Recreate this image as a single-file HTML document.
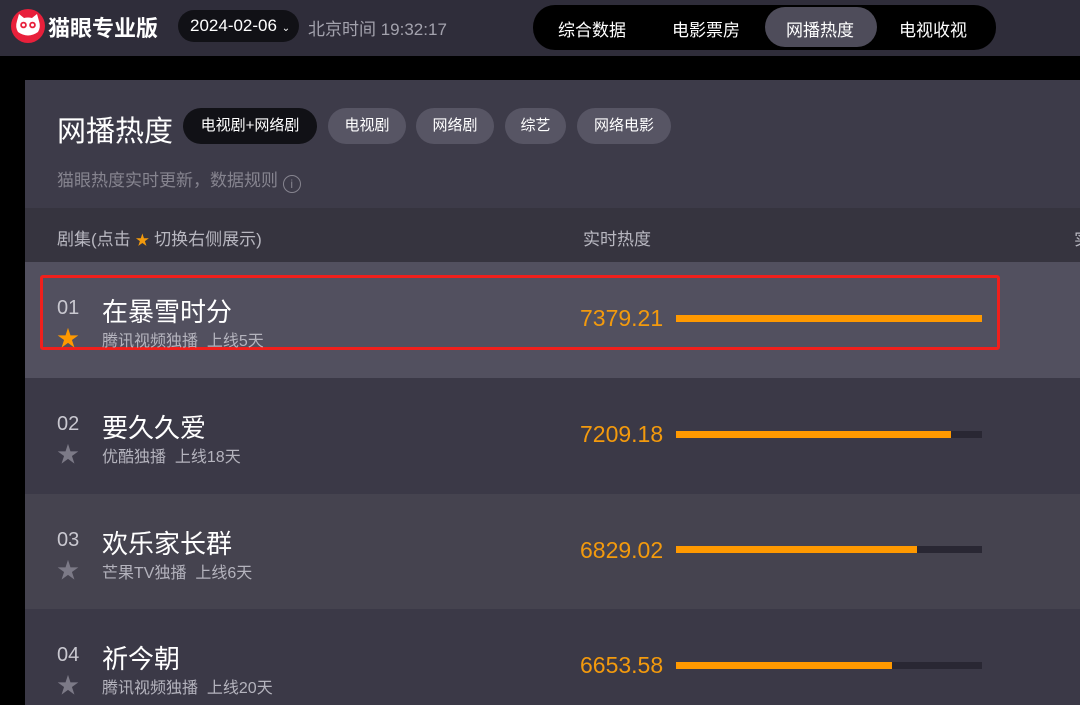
<!DOCTYPE html>
<html><head><meta charset="utf-8"><style>
*{margin:0;padding:0;box-sizing:border-box}
body{width:1080px;height:705px;overflow:hidden;background:#000;font-family:"Liberation Sans","Noto Sans CJK SC",sans-serif;position:relative;color:#fff}
.a{position:absolute;white-space:nowrap}
.top{position:absolute;left:0;top:0;width:1080px;height:56px;background:#2f2d3a}
.panel{position:absolute;left:25px;top:80px;width:1055px;height:625px;background:#3d3b49}
.chip{position:absolute;top:108px;height:36px;border-radius:18px;background:#575564;color:#fff;font-size:15px;line-height:36px;text-align:center}
.row{position:absolute;left:25px;width:1055px}
.num{font-size:20px;color:#c9c8d0}
.title{font-size:26px;color:#fff}
.sub{font-size:16px;color:#b4b3bd}
.val{font-size:23px;color:#f39a0d}
.star{font-size:22px;color:#7c7a87}
.track{position:absolute;left:676px;width:306px;height:7px;background:#292733}
.fill{height:7px;background:#ff9900}
</style></head><body>
<div class="top"></div>
<svg class="a" style="left:10px;top:8px" width="36" height="36" viewBox="0 0 36 36"><circle cx="18" cy="18" r="17" fill="#e8203b"/><path d="M7 13 L9 6 L14 10 Q18 9 22 10 L27 6 L29 13 Q31 19 28 24 Q18 31 8 24 Q5 19 7 13Z" fill="#fff"/><circle cx="13.5" cy="17" r="3.3" fill="#e8203b"/><circle cx="22.5" cy="17" r="3.3" fill="#e8203b"/><circle cx="13.5" cy="17" r="1.5" fill="#fff"/><circle cx="22.5" cy="17" r="1.5" fill="#fff"/></svg>
<div class="a" style="left:48px;top:11px;font-size:22px;color:#fff;font-weight:bold">猫眼专业版</div>
<div class="a" style="left:178px;top:10px;width:121px;height:32px;border-radius:16px;background:#111116;font-size:17px;line-height:32px;padding-left:12px">2024-02-06 <span style="font-size:10px">⌄</span></div>
<div class="a" style="left:308px;top:15px;font-size:17px;color:#a3a2ad">北京时间 19:32:17</div>
<div class="a" style="left:533px;top:5px;width:463px;height:45px;border-radius:22px;background:#000"></div>
<div class="a" style="left:765px;top:7px;width:112px;height:40px;border-radius:20px;background:#4e4c5a"></div>
<div class="a" style="left:558px;top:16px;font-size:17px">综合数据</div>
<div class="a" style="left:672px;top:16px;font-size:17px">电影票房</div>
<div class="a" style="left:786px;top:16px;font-size:17px">网播热度</div>
<div class="a" style="left:899px;top:16px;font-size:17px">电视收视</div>

<div class="panel"></div>
<div class="a" style="left:57px;top:108px;font-size:29px">网播热度</div>
<div class="chip" style="left:183px;width:134px;background:#111116">电视剧+网络剧</div>
<div class="chip" style="left:328px;width:78px">电视剧</div>
<div class="chip" style="left:416px;width:78px">网络剧</div>
<div class="chip" style="left:505px;width:61px">综艺</div>
<div class="chip" style="left:577px;width:94px">网络电影</div>
<div class="a" style="left:57px;top:166px;font-size:17px;color:#86848f">猫眼热度实时更新，数据规则 <span style="display:inline-block;width:18px;height:18px;border:1px solid #86848f;border-radius:50%;font-size:12px;line-height:16px;text-align:center;vertical-align:-2px">i</span></div>

<div class="row" style="top:208px;height:54px;background:#36343f"></div>
<div class="a" style="left:57px;top:225px;font-size:17px;color:#b8b7c0">剧集(点击 <span style="color:#f39a0d;font-size:14px">★</span> 切换右侧展示)</div>
<div class="a" style="left:583px;top:225px;font-size:17px;color:#b8b7c0">实时热度</div>
<div class="a" style="left:1074px;top:225px;font-size:17px;color:#b8b7c0">实</div>

<div class="row" style="top:262px;height:116px;background:#52505f"></div>
<div class="row" style="top:378px;height:116px;background:#3b3947"></div>
<div class="row" style="top:494px;height:115px;background:#45434f"></div>
<div class="row" style="top:609px;height:96px;background:#3b3947"></div>

<div class="a" style="left:40px;top:275px;width:960px;height:75px;border:3px solid #f0201c;border-radius:3px"></div>

<div class="a num" style="left:57px;top:297px">01</div>
<div class="a star" style="left:57px;top:321px;color:#ff9900">★</div>
<div class="a title" style="left:102px;top:292px">在暴雪时分</div>
<div class="a sub" style="left:102px;top:327px">腾讯视频独播&nbsp; 上线5天</div>
<div class="a val" style="left:580px;top:305px">7379.21</div>
<div class="track" style="top:315px"><div class="fill" style="width:306px"></div></div>

<div class="a num" style="left:57px;top:413px">02</div>
<div class="a star" style="left:57px;top:437px">★</div>
<div class="a title" style="left:102px;top:408px">要久久爱</div>
<div class="a sub" style="left:102px;top:443px">优酷独播&nbsp; 上线18天</div>
<div class="a val" style="left:580px;top:421px">7209.18</div>
<div class="track" style="top:431px"><div class="fill" style="width:275px"></div></div>

<div class="a num" style="left:57px;top:529px">03</div>
<div class="a star" style="left:57px;top:553px">★</div>
<div class="a title" style="left:102px;top:524px">欢乐家长群</div>
<div class="a sub" style="left:102px;top:559px">芒果TV独播&nbsp; 上线6天</div>
<div class="a val" style="left:580px;top:537px">6829.02</div>
<div class="track" style="top:546px"><div class="fill" style="width:241px"></div></div>

<div class="a num" style="left:57px;top:644px">04</div>
<div class="a star" style="left:57px;top:668px">★</div>
<div class="a title" style="left:102px;top:639px">祈今朝</div>
<div class="a sub" style="left:102px;top:674px">腾讯视频独播&nbsp; 上线20天</div>
<div class="a val" style="left:580px;top:652px">6653.58</div>
<div class="track" style="top:662px"><div class="fill" style="width:216px"></div></div>
</body></html>
